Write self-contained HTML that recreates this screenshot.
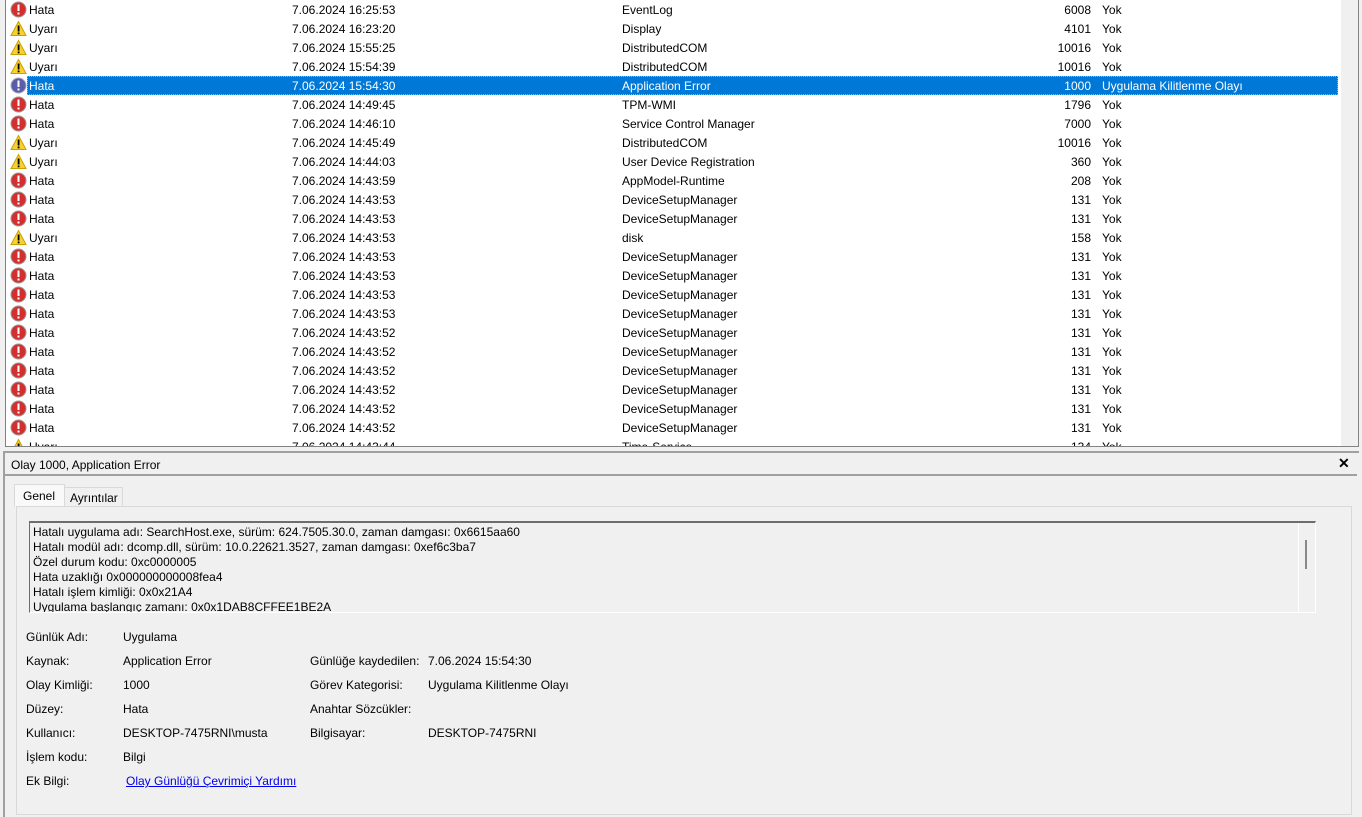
<!DOCTYPE html>
<html><head><meta charset="utf-8"><style>
*{margin:0;padding:0;box-sizing:border-box}
body{width:1362px;height:817px;background:#f0f0f0;font-family:"Liberation Sans",sans-serif;font-size:12px;color:#000;position:relative;overflow:hidden}
.list{position:absolute;left:5px;top:0;width:1354px;height:447px;background:#fff;border-left:1px solid #828282;border-right:1px solid #828282;border-bottom:1px solid #828282;overflow:hidden}
.sb{position:absolute;right:0;top:0;width:17px;height:446px;background:#f0f0f0}
.row{position:absolute;left:0;height:19px;width:1335px}
.row span{position:absolute;top:3px;white-space:nowrap}
.sel{background:#0078d7;color:#fff;outline:1px dotted #f7a04a;outline-offset:-1px}
.ic{position:absolute;left:4px;top:1px;width:17px;height:17px}
.abs{position:absolute;white-space:nowrap}
.pane{position:absolute;left:3px;top:451px;width:1356px;height:366px;border-left:2px solid #a0a0a0;border-top:2px solid #a0a0a0}
a{color:#0000ee}
</style></head><body>
<div class="list" id="list"><div class="sb"></div></div>
<div class="pane">
 <div class="abs" style="left:6px;top:5px">Olay 1000, Application Error</div>
 <div class="abs" style="left:1333px;top:2px;font-weight:bold;font-size:14px">✕</div>
 <div class="abs" style="left:0;top:21px;width:1352px;height:2px;background:#a0a0a0"></div>
 <div class="abs" style="left:9px;top:31px;width:51px;height:23px;background:#f9f9f9;border:1px solid #d9d9d9;border-bottom:none;padding:4px 0 0 8px">Genel</div>
 <div class="abs" style="left:60px;top:34px;width:58px;height:20px;border:1px solid #d9d9d9;border-left:none;border-bottom:none;padding:3px 0 0 5px">Ayrıntılar</div>
 <div class="abs" style="left:11px;top:53px;width:1336px;height:309px;border:1px solid #d9d9d9;background:#f0f0f0"></div>
 <div class="abs" style="left:24px;top:68px;width:1287px;height:92px;border-top:2px solid #6d6d6d;border-left:1px solid #6d6d6d;border-right:1px solid #fff;border-bottom:1px solid #fff;overflow:hidden;line-height:15px;padding:2px 0 0 3px">
  Hatalı uygulama adı: SearchHost.exe, sürüm: 624.7505.30.0, zaman damgası: 0x6615aa60<br>Hatalı modül adı: dcomp.dll, sürüm: 10.0.22621.3527, zaman damgası: 0xef6c3ba7<br>Özel durum kodu: 0xc0000005<br>Hata uzaklığı 0x000000000008fea4<br>Hatalı işlem kimliği: 0x0x21A4<br>Uygulama başlangıç zamanı: 0x0x1DAB8CFFEE1BE2A
  <div class="abs" style="right:0;top:0;width:17px;height:92px;border-left:1px solid #fff"></div>
  <div class="abs" style="right:8px;top:17px;width:2px;height:29px;background:#888"></div>
 </div>
 <div class="abs" style="left:21px;top:177px">Günlük Adı:</div><div class="abs" style="left:118px;top:177px">Uygulama</div>
 <div class="abs" style="left:21px;top:201px">Kaynak:</div><div class="abs" style="left:118px;top:201px">Application Error</div>
 <div class="abs" style="left:305px;top:201px">Günlüğe kaydedilen:</div><div class="abs" style="left:423px;top:201px">7.06.2024 15:54:30</div>
 <div class="abs" style="left:21px;top:225px">Olay Kimliği:</div><div class="abs" style="left:118px;top:225px">1000</div>
 <div class="abs" style="left:305px;top:225px">Görev Kategorisi:</div><div class="abs" style="left:423px;top:225px">Uygulama Kilitlenme Olayı</div>
 <div class="abs" style="left:21px;top:249px">Düzey:</div><div class="abs" style="left:118px;top:249px">Hata</div>
 <div class="abs" style="left:305px;top:249px">Anahtar Sözcükler:</div>
 <div class="abs" style="left:21px;top:273px">Kullanıcı:</div><div class="abs" style="left:118px;top:273px">DESKTOP-7475RNI\musta</div>
 <div class="abs" style="left:305px;top:273px">Bilgisayar:</div><div class="abs" style="left:423px;top:273px">DESKTOP-7475RNI</div>
 <div class="abs" style="left:21px;top:297px">İşlem kodu:</div><div class="abs" style="left:118px;top:297px">Bilgi</div>
 <div class="abs" style="left:21px;top:321px">Ek Bilgi:</div><div class="abs" style="left:121px;top:321px"><a href="#">Olay Günlüğü Çevrimiçi Yardımı</a></div>
</div>
<script>
var rows=[
["H","7.06.2024 16:25:53","EventLog","6008","Yok"],
["U","7.06.2024 16:23:20","Display","4101","Yok"],
["U","7.06.2024 15:55:25","DistributedCOM","10016","Yok"],
["U","7.06.2024 15:54:39","DistributedCOM","10016","Yok"],
["S","7.06.2024 15:54:30","Application Error","1000","Uygulama Kilitlenme Olayı"],
["H","7.06.2024 14:49:45","TPM-WMI","1796","Yok"],
["H","7.06.2024 14:46:10","Service Control Manager","7000","Yok"],
["U","7.06.2024 14:45:49","DistributedCOM","10016","Yok"],
["U","7.06.2024 14:44:03","User Device Registration","360","Yok"],
["H","7.06.2024 14:43:59","AppModel-Runtime","208","Yok"],
["H","7.06.2024 14:43:53","DeviceSetupManager","131","Yok"],
["H","7.06.2024 14:43:53","DeviceSetupManager","131","Yok"],
["U","7.06.2024 14:43:53","disk","158","Yok"],
["H","7.06.2024 14:43:53","DeviceSetupManager","131","Yok"],
["H","7.06.2024 14:43:53","DeviceSetupManager","131","Yok"],
["H","7.06.2024 14:43:53","DeviceSetupManager","131","Yok"],
["H","7.06.2024 14:43:53","DeviceSetupManager","131","Yok"],
["H","7.06.2024 14:43:52","DeviceSetupManager","131","Yok"],
["H","7.06.2024 14:43:52","DeviceSetupManager","131","Yok"],
["H","7.06.2024 14:43:52","DeviceSetupManager","131","Yok"],
["H","7.06.2024 14:43:52","DeviceSetupManager","131","Yok"],
["H","7.06.2024 14:43:52","DeviceSetupManager","131","Yok"],
["H","7.06.2024 14:43:52","DeviceSetupManager","131","Yok"],
["U","7.06.2024 14:43:44","Time-Service","134","Yok"]];
var h='';
var err='<svg class="ic" viewBox="0 0 17 17"><circle cx="8.5" cy="8.5" r="7.5" fill="#d32f2f" stroke="#999" stroke-width="1"/><rect x="7.5" y="3.5" width="2" height="6.5" fill="#fff"/><rect x="7.5" y="11.5" width="2" height="2" fill="#fff"/></svg>';
var sel='<svg class="ic" viewBox="0 0 17 17"><circle cx="8.5" cy="8.5" r="7.5" fill="#5a5ea8" stroke="#aab" stroke-width="1"/><rect x="7.5" y="3.5" width="2" height="6.5" fill="#fff"/><rect x="7.5" y="11.5" width="2" height="2" fill="#fff"/></svg>';
var warn='<svg class="ic" viewBox="0 0 17 17"><path d="M8.5 1.5L16 15.5H1z" fill="#f7d031" stroke="#c9a000" stroke-width="1"/><rect x="7.7" y="5.5" width="1.8" height="6" fill="#000"/><rect x="7.7" y="12.5" width="1.8" height="1.8" fill="#000"/></svg>';
rows.forEach(function(r,i){
 var s=r[0]=="S",o=s?21:0;
 var ic=r[0]=="H"?err:r[0]=="U"?warn:sel;
 var lv=r[0]=="U"?"Uyarı":"Hata";
 h+='<div class="row'+(s?' sel':'')+'" style="top:'+(i*19)+'px;'+(s?'left:21px;width:1311px':'')+'">'+
 '<span style="left:'+(-o)+'px;top:0">'+ic+'</span>'+
 '<span style="left:'+(23-o)+'px">'+lv+'</span><span style="left:'+(286-o)+'px">'+r[1]+'</span><span style="left:'+(616-o)+'px">'+r[2]+'</span><span style="left:'+(1051-o)+'px;width:34px;text-align:right">'+r[3]+'</span><span style="left:'+(1096-o)+'px">'+r[4]+'</span></div>';
});
document.getElementById('list').insertAdjacentHTML('afterbegin',h);
</script>
</body></html>
